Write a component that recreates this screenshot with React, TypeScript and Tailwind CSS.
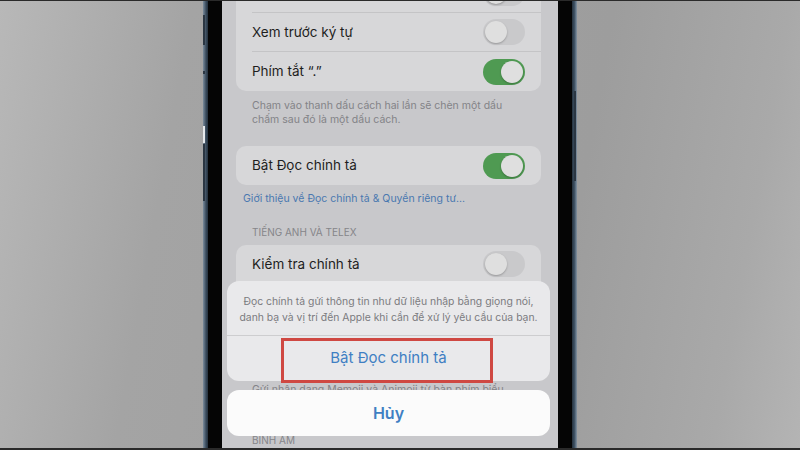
import React from 'react'

const font = { fontFamily: 'Inter, "Noto Sans", sans-serif' }

interface ToggleProps {
  on: boolean
}

const Toggle: React.FC<ToggleProps> = ({ on }) => (
  <div
    className={`flex h-[26px] w-[42px] shrink-0 items-center rounded-full p-[2px] ${
      on ? 'justify-end bg-[#4f9a52]' : 'justify-start bg-[#c9c9cb]'
    }`}
  >
    <div className="h-[22px] w-[22px] rounded-full bg-[#dfdfdf] shadow-[0_1px_2px_rgba(0,0,0,0.25)]" />
  </div>
)

interface RowProps {
  label?: string
  on: boolean
  last?: boolean
}

const Row: React.FC<RowProps> = ({ label, on, last }) => (
  <div className="ml-4 flex">
    <div
      className={`flex h-[39px] flex-1 items-center justify-between pr-4 ${
        last ? '' : 'border-b border-[#c4c4c6]'
      }`}
    >
      <span className="text-[13.5px] text-[#1e1e1e]">{label}</span>
      <Toggle on={on} />
    </div>
  </div>
)

const Footnote: React.FC<{ children: React.ReactNode; className?: string }> = ({ children, className }) => (
  <p className={`pl-4 pr-3 text-[10.5px] leading-[14px] text-[#838387] ${className ?? ''}`}>{children}</p>
)

const Header: React.FC<{ children: React.ReactNode; className?: string }> = ({ children, className }) => (
  <p className={`pl-4 text-[10px] uppercase leading-[14px] text-[#858589] ${className ?? ''}`}>{children}</p>
)

function Screen() {
  return (
    <div className="relative w-[336px] overflow-hidden bg-[#c8c8cb]">
      {/* settings list, dimmed under the sheet */}
      <div className="flex flex-col pl-[14px] pr-[17px]">
        <div className="-mt-[27px] rounded-b-[10px] bg-[#d7d7d9]">
          <Row on={false} />
          <Row label="Xem trước ký tự" on={false} />
          <Row label="Phím tắt “.”" on={true} last />
        </div>
        <Footnote className="mt-[8px]">
          Chạm vào thanh dấu cách hai lần sẽ chèn một dấu
          <br />
          chấm sau đó là một dấu cách.
        </Footnote>

        <div className="mt-[19px] rounded-[10px] bg-[#d7d7d9]">
          <Row label="Bật Đọc chính tả" on={true} last />
        </div>
        <p className="mt-[7px] pl-[7px] text-[10.5px] leading-[14px] text-[#4a78b0]">
          Giới thiệu về Đọc chính tả &amp; Quyền riêng tư...
        </p>

        <Header className="mt-[19px]">Tiếng Anh và Telex</Header>
        <div className="mt-[6px] rounded-[10px] bg-[#d7d7d9]">
          <Row label="Kiểm tra chính tả" on={false} />
          {/* rows hidden behind the action sheet */}
          <Row on={true} />
          <Row on={true} last />
        </div>
        <Footnote className="mt-[21px]">
          Gửi nhận dạng Memoji và Animoji từ bàn phím biểu
          <br />
          tượng cảm xúc.
        </Footnote>
        <Header className="mt-[22px]">Bính âm</Header>
      </div>

      {/* action sheet */}
      <div className="absolute bottom-[12px] left-[5px] right-[8px] flex flex-col gap-[9px]">
        <div className="rounded-[12px] bg-[#e9e9eb]">
          <p className="whitespace-nowrap border-b border-[#cdcdcf] pb-[9px] pt-[13px] text-center text-[10.4px] leading-[16px] text-[#7b7b7f]">
            Đọc chính tả gửi thông tin như dữ liệu nhập bằng giọng nói,
            <br />
            danh bạ và vị trí đến Apple khi cần để xử lý yêu cầu của bạn.
          </p>
          <div className="relative flex h-[45px] items-center justify-center">
            <span className="text-[15px] text-[#3f7fc3]">Bật Đọc chính tả</span>
            <div className="absolute left-[54px] top-[2px] h-[45px] w-[212px] border-[3px] border-[#cf4842]" />
          </div>
        </div>
        <div className="flex h-[46px] items-center justify-center rounded-[12px] bg-[#fbfbfb]">
          <span className="text-[16px] font-semibold text-[#3f7fc3]">Hủy</span>
        </div>
      </div>
    </div>
  )
}

export default function App() {
  return (
    <div
      style={font}
      className="flex h-[450px] w-[800px] overflow-hidden border-b-2 border-t border-[#2a2a2a] bg-[linear-gradient(100deg,#b8b8b8_0%,#a4a4a4_22%,#9d9d9d_70%,#a9a9a9_90%,#b4b4b4_100%)] pl-[203px]"
    >
      <div className="flex">
        {/* left frame edge with buttons */}
        <div className="relative w-[5px] bg-[linear-gradient(90deg,#7b8c9c,#3a4b5c_60%,#25313d)]">
          <div className="absolute left-0 top-[14px] h-[30px] w-[2px] bg-[#2b3642]" />
          <div className="absolute left-0 top-[70px] h-[3px] w-[2px] bg-[#2b3642]" />
          <div className="absolute left-0 top-[125px] h-[17px] w-[2px] bg-[#e6e9ec]" />
          <div className="absolute left-0 top-[143px] h-[57px] w-[2px] bg-[#2b3642]" />
        </div>
        <div className="w-[14px] bg-[#050505]" />
        <Screen />
        <div className="w-[14px] bg-[#050505]" />
        <div className="relative w-[5px] bg-[linear-gradient(90deg,#25313d,#3f5264_50%,#8494a3)]">
          <div className="absolute right-[1px] top-[90px] h-[90px] w-[2px] bg-[#2b3642]" />
        </div>
      </div>
    </div>
  )
}
